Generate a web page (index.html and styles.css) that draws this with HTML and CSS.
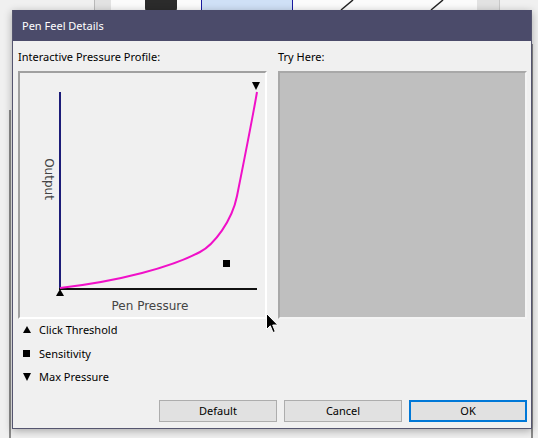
FILE: index.html
```html
<!DOCTYPE html>
<html lang="en">
<head>
    <meta charset="UTF-8">
    <title>Pen Feel Details</title>
    <link rel="stylesheet" href="styles.css">
</head>
<body>
    <div class="desktop">
        <div class="toolbar">
            <div class="tb-pad"></div>
            <div class="tb-grey"></div>
            <div class="tb-white">
                <div class="tb-icon"></div>
            </div>
            <div class="tb-selected"></div>
            <div class="tb-white tb-lines">
                <svg width="184" height="12" viewBox="293 0 184 12">
                    <line x1="341" y1="10" x2="353" y2="0" stroke="#222" stroke-width="1.5"/>
                    <line x1="431" y1="10" x2="443" y2="0" stroke="#222" stroke-width="1.5"/>
                </svg>
            </div>
            <div class="tb-grey tb-grey-right"></div>
        </div>
        <div class="stage">
            <div class="edge-left"></div>
            <div class="edge-right"></div>
        </div>

        <div class="dialog">
            <div class="titlebar">Pen Feel Details</div>
            <div class="dialog-body">
                <div class="columns">
                    <div class="column">
                        <div class="caption">Interactive Pressure Profile:</div>
                        <div class="panel">
                            <svg class="graph" width="245" height="244" viewBox="20 74 245 244">
                                <line x1="60" y1="93" x2="60" y2="290" stroke="#1c1c78" stroke-width="2"/>
                                <line x1="59" y1="290" x2="257" y2="290" stroke="#111" stroke-width="2"/>
                                <path d="M60 289 C120 282 172 268 200 253 C214 245.5 232 222 237 197 C241 177 252 122 257 93"
                                      fill="none" stroke="#f010c8" stroke-width="2"/>
                                <polygon points="252,83 260,83 256,91" fill="#000"/>
                                <polygon points="56,297 64,297 60,290" fill="#000"/>
                                <rect x="223" y="261" width="7" height="7" fill="#000"/>
                                <text x="48" y="180" class="axis-label" transform="rotate(90 48 180)" text-anchor="middle" dominant-baseline="middle">Output</text>
                                <text x="150" y="311" class="axis-label" text-anchor="middle">Pen Pressure</text>
                            </svg>
                        </div>
                    </div>
                    <div class="column">
                        <div class="caption">Try Here:</div>
                        <div class="panel try-area"></div>
                    </div>
                </div>

                <ul class="legend">
                    <li><span class="mark tri-up"></span>Click Threshold</li>
                    <li><span class="mark square"></span>Sensitivity</li>
                    <li><span class="mark tri-down"></span>Max Pressure</li>
                </ul>

                <div class="buttons">
                    <button class="button">Default</button>
                    <button class="button">Cancel</button>
                    <button class="button default">OK</button>
                </div>
            </div>

            <svg class="cursor" width="13" height="21" viewBox="0 0 13 21">
                <path d="M0.5 0.5 L0.5 16.5 L4.3 12.8 L7 19.5 L9.3 18.6 L6.7 12 L11.8 12 Z" fill="#000" stroke="#fff" stroke-width="1"/>
            </svg>
        </div>
    </div>
</body>
</html>
```

FILE: styles.css
```css
* {
    box-sizing: border-box;
}

body {
    margin: 0;
    background-color: #f0f0f0;
    font-family: "Noto Sans", "Open Sans", sans-serif;
    font-size: 11px;
    color: #000;
}

.desktop {
    position: relative;
    width: 538px;
    height: 438px;
    overflow: hidden;
}

/* window behind the dialog */
.toolbar {
    display: flex;
    height: 12px;
}

.tb-pad {
    width: 94px;
    background-color: #f0f0f0;
}

.tb-grey {
    width: 17px;
    background-color: #e2e2e2;
    border-left: 1px solid #b9b9b9;
}

.tb-white {
    width: 90px;
    background-color: #fbfbfb;
    display: flex;
}

.tb-icon {
    width: 32px;
    height: 12px;
    margin-left: 34px;
    background-color: #2b2b2b;
    border-radius: 0 0 4px 4px;
}

.tb-selected {
    width: 92px;
    background-color: #cfe0f6;
    border-left: 1px solid #1a1aa0;
    border-right: 1px solid #1a1aa0;
}

.tb-lines {
    width: 184px;
    display: block;
}

.tb-grey-right {
    width: 23px;
    border-left: none;
    border-right: 1px solid #c8c8c8;
}

.stage {
    display: flex;
    justify-content: space-between;
    height: 426px;
}

.edge-left {
    width: 11px;
    margin-top: 98px;
    border-right: 2px solid #8a8a8a;
}

.edge-right {
    width: 7px;
    margin-top: 32px;
    border-left: 2px solid #8a8a8a;
}

/* dialog window */
.dialog {
    position: absolute;
    left: 12px;
    top: 10px;
    width: 520px;
    height: 419px;
    background-color: #f0f0f0;
    border: 1px solid #55556f;
    border-top: none;
    box-shadow: 0 2px 8px rgba(0, 0, 0, 0.3);
}

.titlebar {
    height: 31px;
    background-color: #4b4b6a;
    color: #fff;
    padding-left: 9px;
    line-height: 31px;
}

.dialog-body {
    padding: 8px 4px 0 5px;
}

.columns {
    display: flex;
    gap: 11px;
}

.column {
    width: 249px;
}

.caption {
    height: 15px;
    line-height: 15px;
    margin-bottom: 7px;
}

.panel {
    height: 248px;
    border: 2px solid;
    border-color: #a0a0a0 #ffffff #ffffff #a0a0a0;
    background-color: #f0f0f0;
}

.graph {
    display: block;
}

.axis-label {
    font-family: "DejaVu Sans", sans-serif;
    font-size: 12px;
    fill: #444;
}

.try-area {
    background-color: #bfbfbf;
    border-color: #a8a8a8 #f4f4f4 #f4f4f4 #a8a8a8;
}

.legend {
    list-style: none;
    margin: -1px 0 0;
    padding: 0 0 0 5px;
}

.legend li {
    display: flex;
    align-items: center;
    height: 23.5px;
}

.mark {
    width: 8px;
    height: 8px;
    margin-right: 8px;
}

.tri-up {
    border-left: 4px solid transparent;
    border-right: 4px solid transparent;
    border-bottom: 7px solid #000;
    height: 7px;
}

.tri-down {
    border-left: 4px solid transparent;
    border-right: 4px solid transparent;
    border-top: 8px solid #000;
    height: 8px;
}

.square {
    width: 7px;
    height: 7px;
    margin-right: 9px;
    background-color: #000;
}

.buttons {
    display: flex;
    justify-content: flex-end;
    gap: 7px;
    margin-top: 11px;
}

.button {
    width: 118px;
    height: 22px;
    padding: 0;
    background-color: #e1e1e1;
    border: 1px solid #adadad;
    font-family: "Noto Sans", "Open Sans", sans-serif;
    font-size: 11px;
    color: #000;
}

.button.default {
    border: 2px solid #0078d7;
}

.cursor {
    position: absolute;
    left: 253px;
    top: 303px;
}
```
